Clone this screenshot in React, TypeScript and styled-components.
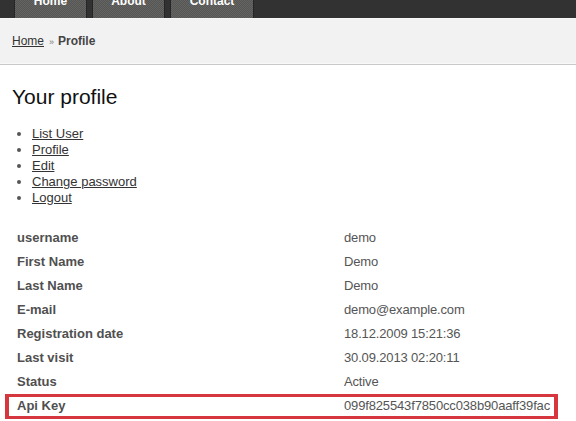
import React from "react";
import styled, { createGlobalStyle } from "styled-components";

const GlobalStyle = createGlobalStyle`
  html, body { margin: 0; padding: 0; background: #fff; }
  body { font-family: "Liberation Sans", Arial, sans-serif; color: #333; }
`;

const Page = styled.div`
  width: 576px;
  min-height: 421px;
  overflow: hidden;
`;

const NavBar = styled.nav`
  height: 18px;
  background: #323232;
  display: flex;
  gap: 5px;
  padding-left: 14px;
  overflow: hidden;
`;

const Tab = styled.a<{ $w: number }>`
  width: ${(p) => p.$w}px;
  box-sizing: border-box;
  height: 18px;
  display: flex;
  justify-content: center;
  align-items: flex-start;
  border-left: 1px solid #262626;
  border-right: 1px solid #262626;
  background-color: #5d5d5b;
  background-image: repeating-conic-gradient(#656563 0 25%, #555553 0 50%);
  background-size: 2px 2px;
  color: #fff;
  font-weight: bold;
  font-size: 12px;
  text-decoration: none;
`;

const TabLabel = styled.span`
  line-height: 16px;
  margin-top: -7px;
`;

const Crumbs = styled.div`
  background: #f2f2f2;
  border-bottom: 1px solid #c9c9c9;
  box-shadow: inset 0 1px 0 #f8f8f8, inset 0 -6px 0 -5px #f8f8f8;
  padding: 15px 12px 14px;
  font-size: 12px;
  line-height: 16px;
  color: #333;
`;

const CrumbLink = styled.a`
  color: #333;
  text-decoration: underline;
`;

const Sep = styled.span`
  color: #777;
  font-size: 9px;
  margin: 0 4px 0 5px;
`;

const Current = styled.span`
  font-weight: bold;
  color: #444;
`;

const Content = styled.main`
  padding: 0 12px;
`;

const Title = styled.h1`
  margin: 20px 0 0;
  font-size: 21px;
  line-height: 24px;
  font-weight: normal;
  color: #111;
`;

const Menu = styled.ul`
  margin: 17px 0 0;
  padding-left: 20px;
  list-style: disc;
  font-size: 13px;
  line-height: 16px;
  color: #555;
`;

const MenuLink = styled.a`
  color: #333;
  text-decoration: underline;
`;

const Table = styled.div`
  margin: 20px 0 0 -7px;
  width: 553px;
`;

const Row = styled.div<{ $marked?: boolean }>`
  position: relative;
  display: grid;
  grid-template-columns: 339px 1fr;
  height: 24px;
  align-items: center;
  font-size: 13px;
  line-height: 24px;
  ${(p) =>
    p.$marked &&
    `
    &::after {
      content: "";
      position: absolute;
      left: 0;
      right: 0;
      top: 0;
      bottom: -1px;
      border: 3px solid #d6363d;
      border-left-width: 4px;
      border-right-width: 4px;
    }
  `}
`;

const Label = styled.div`
  padding-left: 12px;
  font-weight: bold;
  color: #505050;
`;

const Value = styled.div`
  color: #555;
  letter-spacing: -0.15px;
  white-space: nowrap;
`;

const tabs = [
  { label: "Home", w: 73 },
  { label: "About", w: 73 },
  { label: "Contact", w: 84 },
];

const links = ["List User", "Profile", "Edit", "Change password", "Logout"];

const rows: [string, string][] = [
  ["username", "demo"],
  ["First Name", "Demo"],
  ["Last Name", "Demo"],
  ["E-mail", "demo@example.com"],
  ["Registration date", "18.12.2009 15:21:36"],
  ["Last visit", "30.09.2013 02:20:11"],
  ["Status", "Active"],
  ["Api Key", "099f825543f7850cc038b90aaff39fac"],
];

export default function App() {
  return (
    <Page>
      <GlobalStyle />
      <NavBar>
        {tabs.map((t) => (
          <Tab key={t.label} $w={t.w} href="#">
            <TabLabel>{t.label}</TabLabel>
          </Tab>
        ))}
      </NavBar>
      <Crumbs>
        <CrumbLink href="#">Home</CrumbLink>
        <Sep>»</Sep>
        <Current>Profile</Current>
      </Crumbs>
      <Content>
        <Title>Your profile</Title>
        <Menu>
          {links.map((l) => (
            <li key={l}>
              <MenuLink href="#">{l}</MenuLink>
            </li>
          ))}
        </Menu>
        <Table>
          {rows.map(([k, v]) => (
            <Row key={k} $marked={k === "Api Key"}>
              <Label>{k}</Label>
              <Value>{v}</Value>
            </Row>
          ))}
        </Table>
      </Content>
    </Page>
  );
}
